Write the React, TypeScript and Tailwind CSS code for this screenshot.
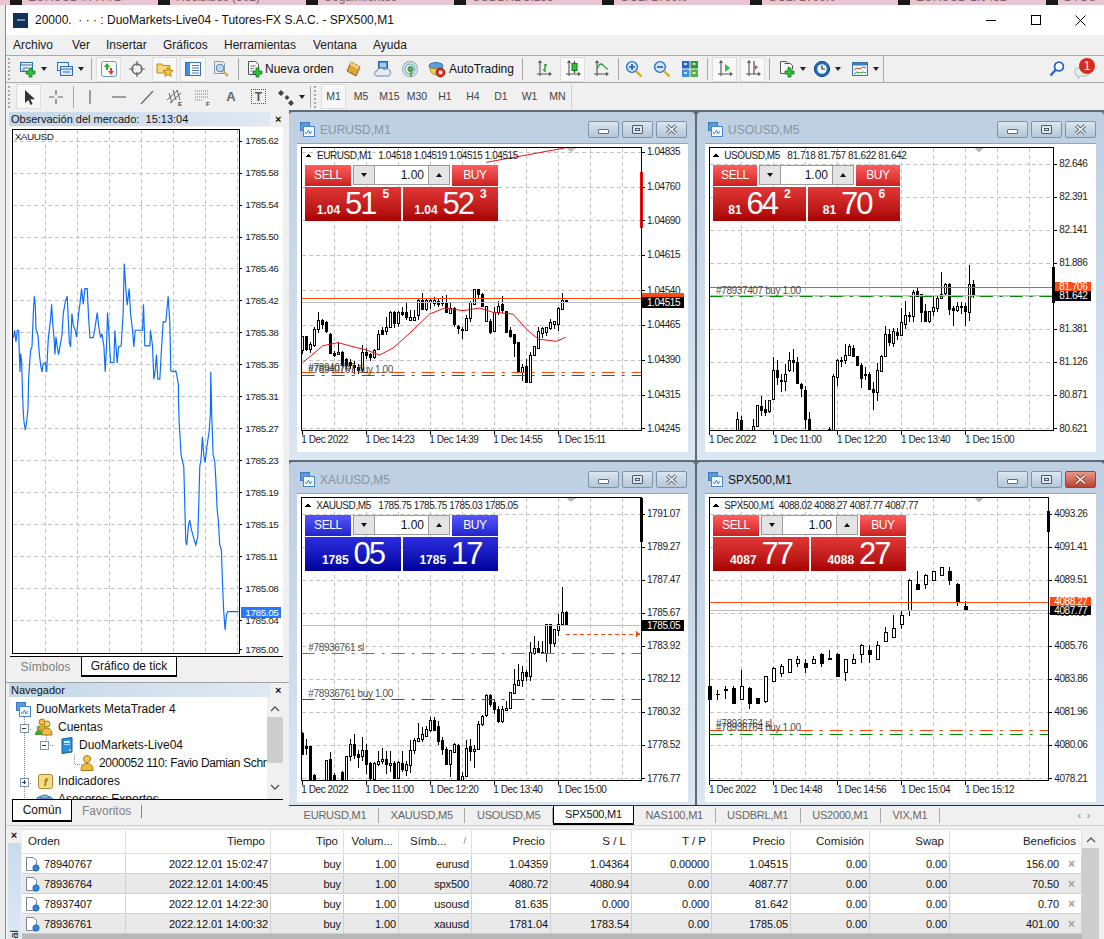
import type { ReactNode } from 'react';

// ---------- small toolbar drawings ----------
const Ico = ({ children, size = 18 }: { children: ReactNode; size?: number }) => (
  <svg width={size} height={size} viewBox="0 0 18 18" className="shrink-0">
    {children}
  </svg>
);
const GreenPlus = () => <path d="M10 8h3v3h3v3h-3v3h-3v-3H7v-3h3z" fill="#2ec13a" stroke="#0f7a1b" strokeWidth="0.8" />;
const Arrow = () => <span className="ml-[4px] h-0 w-0 border-x-[3px] border-t-[4px] border-x-transparent border-t-[#222]" />;
const Axes = () => (
  <path d="M5 1v15M2 14h14M3.5 3L5 1l1.5 2M14 12.5l2 1.5-2 1.5" fill="none" stroke="#555" strokeWidth="1.1" />
);

const ChartPlus = () => (
  <Ico>
    <rect x="1.5" y="2.5" width="12" height="9" fill="#eaf2fb" stroke="#2f6fb0" />
    <path d="M1 5h13M4 8h5M3 10h3" stroke="#2f6fb0" strokeWidth="1" />
    <GreenPlus />
  </Ico>
);
const Profiles = () => (
  <Ico>
    <rect x="1.5" y="2.5" width="11" height="8" fill="#eaf2fb" stroke="#2f6fb0" />
    <rect x="4.5" y="6.5" width="12" height="9" fill="#dbe9f8" stroke="#2f6fb0" />
    <path d="M4 9h13M7 12h7" stroke="#2f6fb0" strokeWidth="1" />
  </Ico>
);
const MarketWatch = () => (
  <Ico>
    <rect x="1.5" y="1.5" width="15" height="15" rx="2" fill="#f4f7fc" stroke="#6d94c2" />
    <path d="M7 3l3 4H8v3H6V7H4z" fill="#2aa834" />
    <path d="M11 15l-3-4h2V8h2v3h2z" fill="#e2402a" />
  </Ico>
);
const Target = () => (
  <Ico>
    <circle cx="9" cy="9" r="5" fill="none" stroke="#666" strokeWidth="1.4" />
    <path d="M9 1v5M9 12v5M1 9h5M12 9h5" stroke="#666" strokeWidth="1.2" />
  </Ico>
);
const FolderStar = () => (
  <Ico>
    <path d="M1 4h5l1 1.5h7V13H1z" fill="#f6d97a" stroke="#b98b22" />
    <path d="M12 7l1.6 3.2 3.4.4-2.5 2.3.7 3.4-3.2-1.7-3.2 1.7.7-3.4L7 10.6l3.4-.4z" fill="#f3c531" stroke="#a67a12" strokeWidth="0.8" />
  </Ico>
);
const DataWin = () => (
  <Ico>
    <rect x="1.5" y="2.5" width="15" height="13" fill="#f5f9fe" stroke="#3d72ac" />
    <rect x="2" y="3" width="4" height="12" fill="#3f8fdb" />
    <path d="M8 5.5h7M8 8h7M8 10.5h7M8 13h7" stroke="#5c7fa8" />
  </Ico>
);
const DocLens = () => (
  <Ico>
    <path d="M2.5 1.5h8l2 2v10h-10z" fill="#edf0f4" stroke="#8a97a8" />
    <circle cx="8" cy="8" r="3.8" fill="#bcd9f3" stroke="#5a7fa6" />
    <path d="M11 11l5 5" stroke="#d6a92c" strokeWidth="2.2" />
  </Ico>
);
const NewOrder = () => (
  <Ico>
    <path d="M2.5 1.5h7l3 3v10h-10z" fill="#f7f7f7" stroke="#555" />
    <path d="M4.5 6h5M4.5 8.5h3M4.5 11h2" stroke="#777" />
    <GreenPlus />
  </Ico>
);
const Gold = () => (
  <Ico>
    <path d="M6 2l9 5-4 9-9-5z" fill="#dba73a" stroke="#8a6414" />
    <path d="M6 2l9 5-3 2-8-5z" fill="#f0cd76" />
  </Ico>
);
const CloudDoc = () => (
  <Ico>
    <rect x="4.5" y="1.5" width="9" height="9" fill="#4a97e0" stroke="#2360a6" />
    <path d="M6 4h6M6 6h6" stroke="#fff" />
    <path d="M3 16a2.5 2.5 0 0 1 0-5 4 4 0 0 1 7-1.5A3.5 3.5 0 0 1 15 16z" fill="#e4edf7" stroke="#6d88a8" />
  </Ico>
);
const Signal = () => (
  <Ico>
    <circle cx="9" cy="9" r="7.5" fill="none" stroke="#a7b6c5" strokeWidth="1.3" />
    <circle cx="9" cy="9" r="5" fill="none" stroke="#7fb3c4" strokeWidth="1.3" />
    <circle cx="9.5" cy="9" r="2.6" fill="#57b36b" stroke="#3a8a4b" />
    <path d="M10 9v8" stroke="#4a9a5a" strokeWidth="1.5" />
  </Ico>
);
const Auto = () => (
  <Ico>
    <ellipse cx="8" cy="6" rx="7" ry="3.4" fill="#5aa0dc" stroke="#2c6aa6" />
    <path d="M2 8c0 4 3 7 6 7s5-2 6-5z" fill="#f1cf5a" stroke="#b28f25" />
    <circle cx="12.5" cy="12.5" r="4.4" fill="#d9321f" stroke="#8e1b10" />
    <rect x="10.8" y="10.8" width="3.4" height="3.4" fill="#fff" />
  </Ico>
);
const BarIco = () => (
  <Ico>
    <Axes />
    <path d="M10 4v8M8 10h2M10 5h2" stroke="#1f9c2c" strokeWidth="1.4" fill="none" />
  </Ico>
);
const CandleIco = () => (
  <Ico>
    <Axes />
    <path d="M10.5 1v12" stroke="#222" />
    <rect x="8" y="3.5" width="5" height="7" fill="#2ec13a" stroke="#0f7a1b" />
  </Ico>
);
const LineIco = () => (
  <Ico>
    <Axes />
    <path d="M5 9c2-5 4-6 6-4s3 4 5 4" fill="none" stroke="#2aa040" strokeWidth="1.3" />
  </Ico>
);
const Lens = ({ mode }: { mode: 'in' | 'out' }) => (
  <Ico>
    <circle cx="7" cy="7" r="5.4" fill="#cfe6fb" stroke="#2c72c4" strokeWidth="1.4" />
    <path d={mode === 'in' ? 'M4 7h6M7 4v6' : 'M4 7h6'} stroke="#1c5fb2" strokeWidth="1.6" />
    <path d="M11 11l5.5 5.5" stroke="#d6a92c" strokeWidth="2.4" />
  </Ico>
);
const Tile = () => (
  <Ico>
    <rect x="1" y="1" width="7.5" height="7.5" fill="#2766c4" />
    <rect x="9.5" y="1" width="7.5" height="7.5" fill="#2d9a3a" />
    <rect x="1" y="9.5" width="7.5" height="7.5" fill="#3f8fe0" />
    <rect x="9.5" y="9.5" width="7.5" height="7.5" fill="#58b04a" />
    <path d="M3 4h3M11.5 4h3M3 13h3M11.5 13h3" stroke="#fff" strokeWidth="1.5" />
  </Ico>
);
const ShiftIco = () => (
  <Ico>
    <Axes />
    <path d="M9 4l5 4-5 4z" fill="#2ec13a" />
  </Ico>
);
const ScrollIco = () => (
  <Ico>
    <Axes />
    <path d="M10 1v13" stroke="#333" />
    <path d="M11 5l1.5 1.5L15 7l-2.5 1L11 10z" fill="#d9321f" />
  </Ico>
);
const TplPlus = () => (
  <Ico>
    <path d="M2.5 1.5h6l2 2v10h-8z" fill="#f6f6f6" stroke="#555" />
    <path d="M6.5 3.5h6l2 2v4" fill="#f6f6f6" stroke="#555" />
    <GreenPlus />
  </Ico>
);
const Clock = () => (
  <Ico>
    <circle cx="9" cy="9" r="7.6" fill="#1d6cc0" stroke="#0d4586" />
    <circle cx="9" cy="9" r="4.8" fill="#eef4fb" />
    <path d="M9 5.5V9h3" fill="none" stroke="#333" strokeWidth="1.2" />
  </Ico>
);
const IndWin = () => (
  <Ico>
    <rect x="1.5" y="2.5" width="15" height="13" fill="#f2f7fd" stroke="#3d72ac" />
    <rect x="2" y="3" width="14" height="2.5" fill="#3d80c8" />
    <path d="M3 10l3-2 3 1 3-2 3 1" fill="none" stroke="#d04a2a" />
    <path d="M3 14l3-2 3 1 3-1 3 1" fill="none" stroke="#2aa040" />
  </Ico>
);
const Search = () => (
  <Ico>
    <circle cx="11" cy="6.5" r="4.4" fill="#fff" stroke="#2a62c0" strokeWidth="1.8" />
    <path d="M7.5 10l-5 5.5" stroke="#2a62c0" strokeWidth="2.4" />
  </Ico>
);
const Notify = () => (
  <svg width="24" height="24" viewBox="0 0 24 24" className="shrink-0">
    <path d="M5 11h9a3 3 0 0 1 3 3v2a3 3 0 0 1-3 3H8l-2 3v-3a3 3 0 0 1-3-3v-2a3 3 0 0 1 2-3z" fill="#e8eaec" stroke="#b5b9bd" />
    <circle cx="15" cy="9" r="8" fill="#d92b1c" />
    <text x="15" y="13" fontSize="12" textAnchor="middle" fill="#fff">1</text>
  </svg>
);
const CursorIco = () => (
  <Ico>
    <path d="M5 2v13l3.4-3 2.2 5 2-1-2.2-4.8H15z" fill="#333" />
  </Ico>
);
const Thin = ({ d }: { d: string }) => (
  <Ico>
    <path d={d} stroke="#666" strokeWidth="1.2" fill="none" />
  </Ico>
);
const ChannelIco = () => (
  <Ico>
    <path d="M1 12L12 2M4 15L15 5M3 5l3 10M7 2l3 10M11 2l3 10" stroke="#555" strokeWidth="0.9" fill="none" />
    <text x="12" y="18" fontSize="6" fontWeight="bold" fill="#444">E</text>
  </Ico>
);
const FiboIco = () => (
  <Ico>
    <path d="M1 3h13M1 6h13M1 9h13M1 12h7" stroke="#777" strokeDasharray="1 1" />
    <text x="12" y="18" fontSize="6" fontWeight="bold" fill="#444">F</text>
  </Ico>
);
const ShapesIco = () => (
  <Ico>
    <path d="M4 2l3 3-3 3-3-3zM10 7l2.5 2.5L10 12 7.500 9.500zM14 12l3 3-3 3-3-3z" fill="#444" />
  </Ico>
);

// ---------- toolbar parts ----------
const Tool = ({ className, on, children }: { className: string; on?: boolean; children: ReactNode }) => (
  <div
    className={`flex h-[25px] shrink-0 items-center justify-center ${on ? 'border border-[#dddddd] bg-[#f8f8f8]' : ''} ${className}`}
  >
    {children}
  </div>
);
const Grip = ({ className }: { className: string }) => (
  <div className={`h-[22px] shrink-0 border-l-2 border-dotted border-[#a8a8a8] ${className}`} />
);
const Sep = ({ className }: { className: string }) => (
  <div className={`flex h-[22px] shrink-0 justify-center ${className}`}>
    <div className="w-px bg-[#a8a8a8]" />
  </div>
);

// ---------- chart window ----------
type Candle = number[];
type Label = [number, string];

// chart coordinates are 3x page px, keep 1px lines on a pixel row
const snap = (v: number, o: number) => o + (Math.floor((v - o) / 3) + 0.5) * 3;

type ChartProps = {
  ox: number;
  right: number;
  labelX: number;
  vx: number[];
  labels: Label[];
  times: string[];
  tx: number[];
  name: string;
  ohlc: string;
  nameX: number;
  ohlcX: number;
  candles: Candle[];
  cw?: number;
  extra: ReactNode;
  tags: ReactNode;
};

const Chart = ({ ox, right, labelX, vx, labels, times, tx, name, ohlc, nameX, ohlcX, candles, cw = 6, extra, tags }: ChartProps) => (
  <svg width="391" height="309" viewBox={`${ox} 100 1173 927`} className="block" shapeRendering="crispEdges">
    <rect x={ox} y="100" width="1173" height="927" fill="#fff" />
    {vx.map((x) => (
      <line key={x} x1={snap(x, ox)} x2={snap(x, ox)} y1="112" y2="958" stroke="#c4c4c4" strokeWidth="3" strokeDasharray="12 9" />
    ))}
    {labels.map(([y]) => (
      <line key={y} x1={ox + 14} x2={right} y1={snap(y, 100)} y2={snap(y, 100)} stroke="#c4c4c4" strokeWidth="3" strokeDasharray="12 9" />
    ))}
    {candles.map(([x, t, b, h, l, f]) => (
      <g key={x}>
        <line x1={x} x2={x} y1={h} y2={Math.min(l, 958)} stroke="#000" strokeWidth="3" />
        <rect
          x={x - cw / 2}
          y={t}
          width={cw}
          height={Math.max(Math.min(b, 958) - t, 1)}
          fill={f ? '#000' : '#fff'}
          stroke="#000"
          strokeWidth="3"
        />
      </g>
    ))}
    {extra}
    <rect x={ox + 13} y="110" width={right - ox - 13} height="850" fill="none" stroke="#000" strokeWidth="3" />
    <polygon points={`${vx[7] + 25},112 ${vx[7] + 55},112 ${vx[7] + 40},124`} fill="#bbb" />
    <polygon points={`${nameX - 34},139 ${nameX - 16},139 ${nameX - 25},129`} fill="#000" />
    <g fontSize="30" letterSpacing="-1.3" fill="#1c1c1c" shapeRendering="auto">
      <text x={nameX} y="144">{name}</text>
      <text x={ohlcX} y="144">{ohlc}</text>
      {labels.map(([y, t]) => (
        <text key={y} x={labelX} y={y + 10}>{t}</text>
      ))}
      {times.map((t, i) => (
        <text key={t} x={tx[i] - 2} y="998">{t}</text>
      ))}
    </g>
    {labels.map(([y]) => (
      <line key={y} x1={right} x2={right + 10} y1={snap(y, 100)} y2={snap(y, 100)} stroke="#000" strokeWidth="3" />
    ))}
    {tx.map((x) => (
      <line key={x} x1={x} x2={x} y1="960" y2="972" stroke="#000" strokeWidth="3" />
    ))}
    {tags}
  </svg>
);

const OrderLine = ({ x1, x2, y, color }: { x1: number; x2: number; y: number; color: string }) => (
  <line x1={x1} x2={x2} y1={snap(y, 100)} y2={snap(y, 100)} stroke={color} strokeWidth="3.6" strokeDasharray="39 21 9 21" shapeRendering="auto" />
);
const SolidLine = ({ x1, x2, y, color }: { x1: number; x2: number; y: number; color: string }) => (
  <line x1={x1} x2={x2} y1={snap(y, 100)} y2={snap(y, 100)} stroke={color} strokeWidth="3" />
);
const Tag = ({ x, y, h, w, bg, t, tx }: { x: number; y: number; h: number; w: number; bg: string; t: string; tx: number }) => (
  <g>
    <rect x={x} y={y} width={w} height={h} fill={bg} />
    <text x={tx} y={y + h / 2 + 11} fontSize="30" letterSpacing="-1.3" fill="#fff" shapeRendering="auto">{t}</text>
  </g>
);
const Note = ({ x, y, t }: { x: number; y: number; t: string }) => (
  <text x={x} y={y} fontSize="30" letterSpacing="-1.1" fill="#333" fillOpacity="0.9" shapeRendering="auto">{t}</text>
);

const WinIcon = ({ className }: { className?: string }) => (
  <svg width="15" height="15" viewBox="0 0 15 15" className={`shrink-0 ${className ?? ''}`}>
    <rect x="0.5" y="0.5" width="9" height="8" fill="#5a9be0" stroke="#3a78c0" />
    <rect x="3.500" y="4.500" width="11" height="10" fill="#f4f8fd" stroke="#4a86cc" />
    <path d="M5 10l1.500 2 2-4 1.500 4 2-3" fill="none" stroke="#4a86cc" />
  </svg>
);

const WinBtn = ({ children, red }: { children: ReactNode; red?: boolean }) => (
  <div
    className={`flex h-[17px] w-[31px] items-center justify-center rounded-[2px] border ${
      red
        ? 'border-[#8c4a3e] bg-linear-to-b from-[#e8998a] to-[#b8402c]'
        : 'border-[#7f93a8] bg-linear-to-b from-[#dbe6f0] to-[#b4c6d8]'
    }`}
  >
    {children}
  </div>
);

const CloseX = ({ active }: { active?: boolean }) => (
  <svg width="13" height="11" viewBox="0 0 13 11">
    <path d="M2 1.500l9 8M11 1.500l-9 8" stroke={active ? '#8c3a2e' : '#4e5a68'} strokeWidth="3.4" />
    <path d="M2 1.500l9 8M11 1.500l-9 8" stroke="#fff" strokeWidth="1.6" />
  </svg>
);

const Window = ({ title, active, children }: { title: string; active?: boolean; children: ReactNode }) => (
  <div className="flex h-[348px] flex-col rounded-t-[4px] bg-linear-to-b from-[#bdcfe1] to-[#dbe6f3]">
    <div className="flex h-[31px] shrink-0 items-center pl-[11px] pr-[8px] pt-[4px]">
      <WinIcon />
      <span className={`ml-[5px] text-[12px] ${active ? 'text-[#111111]' : 'text-[#8895a3]'}`}>{title}</span>
      <div className="ml-auto flex gap-[3px]">
        <WinBtn>
          <span className="mt-[3px] h-[5px] w-[11px] rounded-[1px] border border-[#5d6a78] bg-white" />
        </WinBtn>
        <WinBtn>
          <span className="flex h-[9px] w-[11px] items-center justify-center rounded-[1px] border border-[#4e5a68] bg-[#dde6ee]">
            <span className="h-[3px] w-[5px] border border-[#4e5a68]" />
          </span>
        </WinBtn>
        <WinBtn red={active}>
          <CloseX active={active} />
        </WinBtn>
      </div>
    </div>
    <div className="relative mx-[8px] h-[309px] w-[391px] shrink-0 overflow-hidden border-t border-[#9aa4ae]">{children}</div>
  </div>
);

type Px = { small: string; big: string; sup?: string };

const PriceBox = ({ p, blue, className }: { p: Px; blue?: boolean; className: string }) => (
  <div
    className={`flex h-[34px] items-baseline justify-center pt-[1px] text-white ${
      blue ? 'bg-linear-to-b from-[#2c2ce0] to-[#00009c]' : 'bg-linear-to-b from-[#e23636] to-[#a80000]'
    } ${className}`}
  >
    <span className="mr-[5px] text-[12px] font-bold">{p.small}</span>
    <span className="text-[31px] leading-[32px] tracking-[-2px]">{p.big}</span>
    {p.sup && <span className="ml-[7px] self-start text-[12px] font-bold leading-[13px]">{p.sup}</span>}
  </div>
);

const TradeTab = ({ t, blue, className }: { t: string; blue?: boolean; className: string }) => (
  <div
    className={`flex h-[22px] shrink-0 justify-center border-b border-white text-[12px] leading-[21px] tracking-[-0.4px] text-white ${
      blue ? 'bg-linear-to-b from-[#5656ff] to-[#2222cc]' : 'bg-linear-to-b from-[#ff5c5c] to-[#cc2020]'
    } ${className}`}
  >
    {t}
  </div>
);

const Spin = ({ up }: { up?: boolean }) => (
  <div className="flex w-[20px] shrink-0 items-center justify-center bg-[#e4e4e4]">
    <span
      className={`h-0 w-0 border-x-[3px] border-x-transparent ${
        up ? 'border-b-[4px] border-b-[#111]' : 'border-t-[4px] border-t-[#111]'
      }`}
    />
  </div>
);

const TradePanel = ({ sell, buy, blue, narrow }: { sell: Px; buy: Px; blue?: boolean; narrow?: boolean }) => (
  <div className={`absolute left-[8px] top-[21px] ${narrow ? 'w-[187px]' : 'w-[193px]'}`}>
    <div className="flex">
      <TradeTab t="SELL" blue={blue} className={narrow ? 'w-[44px]' : 'w-[46px]'} />
      <div className={`mx-[2px] flex h-[20px] border border-[#9c9c9c] bg-white ${narrow ? 'w-[95px]' : 'w-[97px]'}`}>
        <Spin />
        <div className="flex-1 border-x border-[#9c9c9c] pr-[4px] text-right text-[12px] leading-[18px] text-[#111]">1.00</div>
        <Spin up />
      </div>
      <TradeTab t="BUY" blue={blue} className={narrow ? 'w-[44px]' : 'w-[46px]'} />
    </div>
    <div className="flex gap-[2px]">
      <PriceBox p={sell} blue={blue} className={narrow ? 'w-[93px]' : 'w-[96px]'} />
      <PriceBox p={buy} blue={blue} className={narrow ? 'w-[92px]' : 'w-[95px]'} />
    </div>
  </div>
);

// ---------- chart data: [x, bodyTop, bodyBottom, high, low, filled], in 1/3 px ----------
const eurCandles: Candle[] = [
  [38, 678, 720, 675, 730, 0], [50, 678, 716, 675, 722, 1], [62, 700, 716, 695, 728, 0], [74, 655, 705, 650, 708, 0],
  [86, 628, 655, 603, 668, 0], [98, 628, 640, 625, 655, 1], [110, 635, 663, 632, 668, 1], [122, 670, 728, 668, 730, 1],
  [134, 727, 733, 722, 738, 1], [146, 726, 730, 695, 733, 0], [158, 724, 765, 722, 770, 1], [170, 745, 765, 742, 775, 1],
  [182, 755, 765, 745, 775, 1], [194, 765, 770, 752, 790, 1], [206, 770, 778, 760, 790, 1], [218, 725, 775, 702, 785, 0],
  [230, 725, 735, 712, 745, 1], [242, 730, 740, 728, 752, 1], [254, 718, 740, 715, 745, 0], [266, 670, 716, 658, 718, 0],
  [278, 660, 670, 648, 672, 1], [290, 650, 662, 620, 674, 0], [302, 606, 650, 600, 652, 0], [314, 606, 638, 602, 652, 1],
  [326, 606, 638, 602, 650, 0], [338, 604, 610, 590, 615, 1], [350, 606, 620, 574, 628, 1], [362, 620, 628, 598, 630, 0],
  [374, 620, 628, 598, 630, 0], [386, 570, 614, 565, 628, 0], [398, 570, 596, 547, 598, 1], [410, 570, 596, 563, 600, 0],
  [422, 570, 576, 563, 595, 0], [434, 570, 578, 558, 585, 0], [446, 572, 582, 566, 588, 1], [458, 575, 578, 556, 585, 1],
  [470, 577, 605, 553, 608, 1], [482, 592, 607, 574, 610, 0], [494, 592, 642, 590, 648, 1], [506, 648, 652, 644, 670, 1],
  [518, 656, 658, 650, 686, 1], [530, 622, 658, 612, 660, 0], [542, 575, 622, 570, 635, 0], [554, 536, 580, 534, 582, 0],
  [566, 536, 552, 534, 562, 1], [578, 550, 588, 548, 590, 1], [590, 588, 632, 586, 634, 0], [602, 632, 664, 625, 670, 1],
  [614, 605, 662, 590, 664, 0], [626, 586, 605, 570, 612, 0], [638, 580, 600, 555, 606, 1], [650, 602, 666, 600, 668, 1],
  [662, 660, 678, 648, 682, 1], [674, 672, 698, 670, 738, 1], [686, 696, 786, 694, 788, 1], [698, 770, 786, 760, 810, 0],
  [710, 768, 815, 745, 816, 1], [722, 733, 815, 725, 818, 0], [734, 708, 733, 706, 736, 0], [746, 663, 712, 650, 714, 0],
  [758, 654, 668, 650, 682, 0], [770, 650, 664, 648, 675, 0], [782, 636, 654, 625, 658, 0], [794, 633, 640, 632, 656, 0],
  [806, 592, 642, 590, 660, 0], [818, 568, 596, 548, 598, 0], [830, 568, 574, 568, 574, 1],
];

const usoCandles: Candle[] = [
  [130, 925, 958, 905, 958, 0], [142, 928, 958, 915, 958, 1], [178, 948, 958, 925, 958, 0], [190, 885, 948, 882, 950, 0],
  [202, 888, 900, 855, 915, 1], [214, 897, 905, 868, 915, 1], [226, 870, 903, 868, 908, 0], [238, 778, 866, 740, 868, 0],
  [250, 778, 800, 748, 822, 1], [262, 808, 811, 790, 845, 1], [274, 790, 812, 760, 840, 0], [286, 750, 780, 725, 785, 0],
  [298, 750, 755, 715, 785, 1], [310, 755, 818, 738, 820, 1], [322, 820, 832, 818, 858, 1], [334, 838, 925, 825, 955, 1],
  [346, 925, 958, 905, 958, 1], [406, 955, 958, 950, 958, 1], [418, 798, 958, 790, 958, 0], [430, 750, 800, 745, 825, 0],
  [442, 750, 752, 740, 770, 1], [454, 733, 748, 700, 760, 0], [466, 708, 735, 700, 737, 0], [478, 712, 737, 702, 738, 1],
  [490, 738, 764, 735, 766, 1], [502, 764, 802, 758, 833, 1], [514, 792, 794, 770, 808, 1], [526, 790, 837, 785, 838, 1],
  [538, 835, 845, 815, 898, 1], [550, 778, 845, 757, 870, 0], [562, 736, 782, 732, 784, 0], [574, 672, 736, 645, 738, 0],
  [586, 670, 696, 655, 707, 1], [598, 662, 698, 652, 708, 0], [610, 664, 675, 652, 688, 1], [622, 636, 674, 592, 676, 0],
  [634, 615, 640, 572, 655, 0], [646, 613, 616, 603, 635, 1], [658, 546, 616, 538, 635, 0], [670, 543, 556, 528, 557, 1],
  [682, 552, 605, 550, 635, 1], [694, 603, 632, 580, 635, 1], [706, 603, 632, 600, 638, 0], [718, 590, 602, 556, 615, 0],
  [730, 562, 592, 555, 605, 0], [742, 550, 563, 483, 566, 0], [754, 520, 549, 518, 552, 0], [766, 520, 596, 518, 612, 1],
  [778, 594, 598, 585, 645, 1], [790, 588, 598, 575, 605, 0], [802, 586, 590, 573, 610, 1], [814, 586, 602, 576, 645, 1],
  [826, 522, 605, 462, 632, 0], [838, 522, 554, 507, 563, 1],
];

const xauCandles: Candle[] = [
  [38, 818, 880, 815, 882, 1], [50, 858, 862, 835, 882, 1], [62, 858, 958, 855, 958, 1], [74, 945, 958, 940, 958, 1],
  [110, 900, 958, 898, 958, 0], [122, 897, 958, 875, 958, 1], [134, 945, 958, 938, 958, 1], [158, 935, 958, 930, 958, 1],
  [170, 888, 958, 885, 958, 0], [182, 850, 888, 835, 900, 0], [194, 850, 885, 820, 895, 1], [206, 880, 890, 868, 923, 1],
  [218, 870, 888, 830, 900, 0], [230, 870, 910, 850, 940, 1], [242, 908, 952, 905, 958, 1], [254, 908, 955, 905, 958, 0],
  [266, 902, 910, 870, 915, 0], [278, 895, 902, 862, 910, 0], [290, 895, 910, 870, 940, 1], [302, 908, 915, 870, 935, 0],
  [314, 908, 952, 900, 955, 1], [326, 906, 952, 902, 955, 0], [338, 908, 925, 870, 935, 1], [350, 912, 928, 900, 945, 0],
  [362, 868, 914, 838, 938, 0], [374, 840, 868, 832, 880, 0], [386, 832, 842, 786, 845, 0], [398, 822, 836, 798, 845, 0],
  [410, 806, 826, 795, 828, 0], [422, 778, 808, 770, 815, 0], [434, 778, 808, 770, 810, 1], [446, 796, 842, 780, 852, 1],
  [458, 838, 866, 830, 883, 1], [470, 866, 912, 860, 913, 1], [482, 870, 912, 868, 950, 0], [494, 852, 875, 848, 878, 0],
  [506, 855, 958, 850, 958, 1], [518, 946, 958, 935, 958, 0], [530, 862, 948, 838, 950, 0], [542, 858, 872, 835, 900, 1],
  [554, 865, 871, 852, 922, 0], [566, 792, 866, 780, 868, 0], [578, 766, 792, 762, 795, 0], [590, 704, 765, 700, 768, 0],
  [602, 704, 732, 700, 738, 1], [614, 726, 746, 715, 760, 1], [626, 747, 782, 735, 788, 1], [638, 746, 782, 735, 788, 0],
  [650, 742, 750, 722, 752, 0], [662, 696, 742, 694, 745, 0], [674, 670, 698, 625, 700, 0], [686, 660, 673, 610, 675, 0],
  [698, 634, 660, 615, 680, 0], [710, 636, 647, 628, 660, 1], [722, 576, 647, 545, 660, 0], [734, 564, 578, 525, 582, 0],
  [746, 562, 575, 540, 578, 1], [758, 574, 577, 540, 578, 1], [770, 492, 577, 490, 605, 0], [782, 492, 548, 490, 580, 1],
  [794, 506, 548, 505, 560, 0], [806, 490, 508, 460, 525, 0], [818, 454, 491, 378, 493, 0], [830, 454, 493, 452, 494, 1],
];

const spxCandles: Candle[] = [
  [46, 676, 716, 648, 728, 1], [70, 700, 702, 688, 718, 1], [94, 686, 688, 675, 716, 1], [118, 682, 727, 676, 728, 1],
  [142, 676, 716, 628, 716, 0], [166, 682, 727, 680, 745, 1], [190, 714, 727, 714, 727, 1], [214, 648, 721, 648, 727, 0],
  [238, 622, 661, 620, 663, 0], [262, 618, 638, 610, 650, 0], [286, 596, 634, 594, 635, 0], [310, 595, 607, 586, 620, 0],
  [334, 607, 620, 594, 636, 1], [358, 595, 607, 586, 610, 0], [382, 580, 608, 578, 620, 1], [406, 594, 596, 568, 596, 1],
  [430, 580, 647, 578, 648, 1], [454, 596, 634, 594, 660, 0], [478, 595, 607, 580, 608, 0], [502, 553, 580, 550, 608, 0],
  [526, 568, 580, 553, 608, 1], [550, 553, 595, 540, 597, 0], [574, 514, 541, 500, 543, 0], [598, 502, 529, 462, 531, 0],
  [622, 463, 490, 450, 505, 0], [646, 358, 448, 356, 465, 0], [670, 370, 385, 330, 387, 1], [694, 343, 370, 340, 386, 0],
  [718, 331, 358, 330, 360, 0], [742, 319, 343, 318, 345, 0], [766, 331, 358, 318, 372, 1], [790, 370, 425, 368, 437, 1],
  [814, 436, 449, 422, 450, 1],
];

const vxA = [133, 229, 325, 421, 517, 613, 709, 805, 901, 997];
const vxB = [142, 238, 334, 430, 526, 622, 718, 814, 910, 1006];

const eurMa = '38,757 70,730 100,705 145,696 190,708 230,718 270,733 310,712 360,668 420,610 465,592 520,600 570,592 610,605 670,610 710,655 745,685 800,692 828,680';

const tickPath =
  '40,698 44,675 48,710 52,675 56,675 58,745 60,800 62,745 65,770 68,875 70,920 72,950 76,975 80,950 84,910 86,820 90,760 92,735 96,725 100,625 103,573 106,600 108,670 114,690 118,745 122,780 126,800 130,775 136,772 140,800 145,700 152,640 155,597 158,650 162,695 165,748 168,695 172,725 176,748 180,725 186,690 190,625 196,590 202,573 205,640 208,710 212,725 216,625 220,660 226,675 230,695 236,625 240,597 245,550 250,597 255,550 262,550 266,635 270,697 280,697 285,670 292,622 296,660 302,697 306,685 312,722 316,800 320,720 323,622 328,697 332,772 342,772 345,675 352,773 356,725 364,722 370,620 373,475 378,550 382,600 388,550 392,625 398,675 402,725 406,675 428,675 431,597 435,722 450,722 452,675 458,722 462,822 466,797 470,748 474,822 480,822 484,750 490,650 498,650 505,573 510,650 513,797 522,800 528,797 532,815 536,840 536,885 538,950 541,1000 544,1050 552,1085 555,1200 558,1310 561,1320 566,1260 570,1245 574,1270 582,1300 588,1320 594,1295 597,1200 600,1085 604,1060 608,995 612,1050 616,1072 622,1020 628,980 632,925 633,800 636,930 640,1048 645,1070 648,1120 652,1210 656,1250 660,1320 665,1335 668,1430 672,1520 676,1575 680,1530 684,1520 718,1520';

const tickLabels: Label[] = [
  [107, '1785.62'], [203, '1785.58'], [299, '1785.54'], [395, '1785.50'], [491, '1785.46'], [587, '1785.42'],
  [683, '1785.38'], [779, '1785.35'], [875, '1785.31'], [971, '1785.27'], [1067, '1785.23'], [1163, '1785.19'],
  [1259, '1785.15'], [1355, '1785.11'], [1451, '1785.08'], [1547, '1785.04'], [1633, '1785.00'],
];

const TickChart = () => (
  <svg width="273" height="529" viewBox="30 65 820 1588" className="block shrink-0" shapeRendering="crispEdges">
    <rect x="30" y="65" width="820" height="1588" fill="#fff" />
    {[137, 233, 329, 425, 521, 617, 713].map((x) => (
      <line key={x} x1={x} x2={x} y1="74" y2="1644" stroke="#c4c4c4" strokeWidth="3" strokeDasharray="12 9" />
    ))}
    {tickLabels.slice(0, 16).map(([y]) => (
      <line key={y} x1="40" x2="718" y1={y} y2={y} stroke="#c4c4c4" strokeWidth="3" strokeDasharray="12 9" />
    ))}
    <polyline points={tickPath} fill="none" stroke="#0a6cff" strokeWidth="3.5" shapeRendering="auto" />
    <rect x="38" y="72" width="680" height="1573" fill="none" stroke="#000" strokeWidth="3" />
    <g fontSize="30" letterSpacing="-1.3" fill="#1c1c1c" shapeRendering="auto">
      <text x="44" y="104">XAUUSD</text>
      {tickLabels.map(([y, t]) => (
        <text key={y} x="737" y={y + 10}>{t}</text>
      ))}
    </g>
    {tickLabels.map(([y]) => (
      <line key={y} x1="718" x2="728" y1={y} y2={y} stroke="#000" strokeWidth="3" />
    ))}
    <Tag x={723} y={1507} w={122} h={32} bg="#2979ff" t="1785.05" tx={737} />
  </svg>
);

// ---------- tree icons ----------
const Users = () => (
  <svg width="18" height="18" viewBox="0 0 18 18" className="shrink-0">
    <circle cx="4" cy="10" r="2.500" fill="#5cc24a" />
    <path d="M0 17c0-4 2-5 4-5s4 1 4 5z" fill="#3da838" />
    <circle cx="7" cy="4" r="3" fill="#f0c04a" stroke="#a87a12" />
    <path d="M3 12c0-3 2-4 4-4s4 1 4 4z" fill="#e8b23a" stroke="#a87a12" />
    <circle cx="12" cy="6" r="3" fill="#f5d06a" stroke="#a87a12" />
    <path d="M7 17c0-5 2-7 5-7s5 2 5 7z" fill="#eebf48" stroke="#a87a12" />
  </svg>
);
const Server = () => (
  <svg width="13" height="17" viewBox="0 0 13 17" className="shrink-0">
    <path d="M1 2l10-1.500V15L1 16.500z" fill="#2d8fe0" stroke="#155a9e" />
    <rect x="3" y="4" width="6" height="2" fill="#d6ecff" />
    <rect x="3" y="7" width="6" height="1" fill="#a9d4f7" />
    <circle cx="9" cy="13" r="1" fill="#ffe080" />
  </svg>
);
const User = () => (
  <svg width="14" height="16" viewBox="0 0 14 16" className="shrink-0">
    <circle cx="7" cy="4" r="3.500" fill="#f2c850" stroke="#a87a12" />
    <path d="M1 15.500c0-5 2-7 6-7s6 2 6 7z" fill="#edbb3e" stroke="#a87a12" />
  </svg>
);
const FuncIco = () => (
  <svg width="15" height="15" viewBox="0 0 15 15" className="shrink-0">
    <rect x="0.500" y="0.500" width="14" height="14" rx="2" fill="#f5dc86" stroke="#a88a2a" />
    <text x="7.500" y="11.500" fontSize="11" fontStyle="italic" fontWeight="bold" textAnchor="middle" fill="#a8761a">f</text>
  </svg>
);
const HatIco = () => (
  <svg width="17" height="15" viewBox="0 0 17 15" className="shrink-0">
    <ellipse cx="8.500" cy="7" rx="8" ry="3" fill="#6aa8dc" stroke="#3a78b0" />
    <path d="M4 6c1-4 8-4 9 0z" fill="#8fc2ea" stroke="#3a78b0" />
  </svg>
);

const TreeRow = ({ className, icon, text }: { className: string; icon: ReactNode; text: string }) => (
  <div className={`flex h-[18px] items-center whitespace-nowrap text-[12px] text-[#111] ${className}`}>
    {icon}
    <span className="ml-[5px]">{text}</span>
  </div>
);

const PanelHead = ({ t }: { t: string }) => (
  <div className="flex h-[14px] shrink-0 items-center">
    <div className="ml-[3px] h-[14px] w-[261px] truncate whitespace-pre bg-linear-to-r from-[#c5d7e8] to-[#e0e9f3] pl-[2px] text-[11px] leading-[14px] text-[#111]">
      {t}
    </div>
    <span className="ml-[5px] text-[11px] font-bold leading-none text-[#111]">×</span>
  </div>
);

// ---------- terminal table ----------
const cols = 'grid grid-cols-[104px_145px_73px_55px_73px_79px_81px_80px_79px_79px_80px_132px]';
const headers = ['Orden', 'Tiempo', 'Tipo', 'Volum...', 'Símb...', 'Precio', 'S / L', 'T / P', 'Precio', 'Comisión', 'Swap', 'Beneficios'];
const rows = [
  ['78940767', '2022.12.01 15:02:47', 'buy', '1.00', 'eurusd', '1.04359', '1.04364', '0.00000', '1.04515', '0.00', '0.00', '156.00'],
  ['78936764', '2022.12.01 14:00:45', 'buy', '1.00', 'spx500', '4080.72', '4080.94', '0.00', '4087.77', '0.00', '0.00', '70.50'],
  ['78937407', '2022.12.01 14:22:30', 'buy', '1.00', 'usousd', '81.635', '0.000', '0.000', '81.642', '0.00', '0.00', '0.70'],
  ['78936761', '2022.12.01 14:00:32', 'buy', '1.00', 'xauusd', '1781.04', '1783.54', '0.00', '1785.05', '0.00', '0.00', '401.00'],
];
const tabs = ['EURUSD,M1', 'XAUUSD,M5', 'USOUSD,M5', 'SPX500,M1', 'NAS100,M1', 'USDBRL,M1', 'US2000,M1', 'VIX,M1'];

const DocDot = () => (
  <svg width="15" height="16" viewBox="0 0 15 16" className="shrink-0">
    <path d="M1.500 1.500h7l3 3v10h-10z" fill="#fff" stroke="#7d8792" />
    <circle cx="11" cy="12" r="3.200" fill="#2e86d8" stroke="#1a5c9e" strokeWidth="0.7" />
  </svg>
);

const menus: [string, string][] = [
  ['Archivo', 'w-[59px]'], ['Ver', 'w-[34px]'], ['Insertar', 'w-[57px]'], ['Gráficos', 'w-[61px]'],
  ['Herramientas', 'w-[89px]'], ['Ventana', 'w-[60px]'], ['Ayuda', 'w-[50px]'],
];
const periods: [string, string][] = [
  ['M5', 'w-[30px]'], ['M15', 'w-[27px]'], ['M30', 'w-[28px]'], ['H1', 'w-[28px]'],
  ['H4', 'w-[28px]'], ['D1', 'w-[28px]'], ['W1', 'w-[29px]'], ['MN', 'w-[27px]'],
];

export default function App() {
  return (
    <div className="relative h-[939px] w-[1104px] overflow-hidden bg-white font-['Liberation_Sans',sans-serif] text-[12px] text-[#111]">
      {/* browser tabs peeking out behind the terminal */}
      <div className="flex h-[5px] overflow-hidden bg-[#e9c5d0] pl-[10px] text-[12px] leading-[3px] text-[#4a3a40]">
        {['EURUSD #FX #L', 'Recibidos (302)', 'Seguimientos', 'USDBRL 5.183', 'GC1! 1799.0', 'GC1! 1799.0', 'EURUSD 1.0452', 'BTCU'].map((t, i) => (
          <div key={i} className="flex w-[148px] shrink-0 items-start gap-[6px]">
            <span className="h-[5px] w-[12px] bg-[#1a1a1a]" />
            <span className="-mt-[4px] opacity-70">{t}</span>
          </div>
        ))}
      </div>

      <div className="flex h-[934px]">
        <div className="w-[5px] shrink-0 bg-[#ececec]" />
        <div className="flex min-w-0 flex-1 flex-col border-l border-[#8a8a8a] bg-[#f0f0f0]">
          {/* title */}
          <div className="flex h-[30px] shrink-0 items-center bg-white">
            <div className="ml-[7px] flex h-[15px] w-[15px] items-center justify-center bg-[#12305c]">
              <span className="h-[2px] w-[8px] bg-[#7d8fa8]" />
            </div>
            <span className="ml-[7px] whitespace-pre text-[12px] text-[#111]">20000.  · · · : DuoMarkets-Live04 - Tutores-FX S.A.C. - SPX500,M1</span>
            <div className="ml-auto mr-px flex">
              <div className="flex h-[30px] w-[45px] items-center justify-center">
                <span className="h-px w-[10px] bg-black" />
              </div>
              <div className="flex h-[30px] w-[45px] items-center justify-center">
                <span className="h-[10px] w-[10px] border border-black" />
              </div>
              <div className="flex h-[30px] w-[45px] items-center justify-center">
                <svg width="11" height="11" viewBox="0 0 11 11">
                  <path d="M.5.500l10 10M10.500.500l-10 10" stroke="#000" />
                </svg>
              </div>
            </div>
          </div>

          {/* menu */}
          <div className="flex h-[20px] shrink-0 items-center pl-[7px]">
            {menus.map(([m, w]) => (
              <span key={m} className={`${w} shrink-0 text-[12px] text-[#1a1a1a]`}>{m}</span>
            ))}
          </div>

          {/* toolbar 1 */}
          <div className="flex h-[28px] shrink-0 items-center border-y border-[#a8a8a8]">
            <div className="flex h-full w-[878px] shrink-0 items-center border-r border-[#a8a8a8]">
              <Grip className="ml-[2px] mr-[5px] w-[0px]" />
              <Tool className="w-[34px] justify-start pl-[4px]"><ChartPlus /><Arrow /></Tool>
              <Tool className="w-[38px] justify-start pl-[7px]"><Profiles /><Arrow /></Tool>
              <Sep className="w-[9px]" />
              <Tool on className="w-[25px]"><MarketWatch /></Tool>
              <Tool className="w-[31px]"><Target /></Tool>
              <Tool on className="w-[25px]"><FolderStar /></Tool>
              <Tool on className="ml-[3px] w-[26px]"><DataWin /></Tool>
              <Tool className="w-[30px]"><DocLens /></Tool>
              <Sep className="w-[4px]" />
              <Tool className="w-[98px] justify-start pl-[6px]"><NewOrder /><span className="ml-[1px] text-[12px] text-[#111]">Nueva orden</span></Tool>
              <Tool className="w-[31px]"><Gold /></Tool>
              <Tool className="w-[27px]"><CloudDoc /></Tool>
              <Tool className="w-[27px]"><Signal /></Tool>
              <Tool className="w-[94px] justify-start pl-[5px]"><Auto /><span className="ml-[3px] text-[12px] text-[#111]">AutoTrading</span></Tool>
              <Sep className="w-[10px]" />
              <Tool className="w-[33px]"><BarIco /></Tool>
              <Tool on className="w-[25px]"><CandleIco /></Tool>
              <Tool className="w-[31px]"><LineIco /></Tool>
              <Sep className="w-[4px]" />
              <Tool className="w-[28px]"><Lens mode="in" /></Tool>
              <Tool className="w-[27px]"><Lens mode="out" /></Tool>
              <Tool className="w-[30px]"><Tile /></Tool>
              <Sep className="w-[4px]" />
              <Tool on className="ml-[3px] w-[25px]"><ShiftIco /></Tool>
              <Tool on className="ml-[3px] w-[25px]"><ScrollIco /></Tool>
              <Sep className="w-[8px]" />
              <Tool className="w-[36px] justify-start pl-[5px]"><TplPlus /><Arrow /></Tool>
              <Tool className="w-[36px] justify-start pl-[4px]"><Clock /><Arrow /></Tool>
              <Tool className="w-[39px] justify-start pl-[6px]"><IndWin /><Arrow /></Tool>
            </div>
            <div className="ml-auto mr-[8px] flex items-center">
              <Search />
              <div className="ml-[6px]"><Notify /></div>
            </div>
          </div>

          {/* toolbar 2 */}
          <div className="flex h-[27px] shrink-0 items-center">
            <Grip className="ml-[2px] mr-[6px] w-[0px]" />
            <Tool on className="w-[25px]"><CursorIco /></Tool>
            <Tool className="w-[29px]"><Thin d="M9 2v5M9 11v5M2 9h5M11 9h5" /></Tool>
            <Sep className="w-[6px]" />
            <Tool className="w-[28px]"><Thin d="M9 2v14" /></Tool>
            <Tool className="w-[30px]"><Thin d="M2 9h14" /></Tool>
            <Tool className="w-[26px]"><Thin d="M3 16L15 3" /></Tool>
            <Tool className="w-[29px]"><ChannelIco /></Tool>
            <Tool className="w-[28px]"><FiboIco /></Tool>
            <Tool className="w-[28px] text-[13px] font-bold text-[#666]">A</Tool>
            <Tool className="w-[27px]">
              <span className="flex h-[15px] w-[15px] items-center justify-center border border-dotted border-[#555] text-[12px] font-bold text-[#555]">T</span>
            </Tool>
            <Tool className="w-[35px] justify-start pl-[5px]"><ShapesIco /><Arrow /></Tool>
            <Sep className="w-[6px]" />
            <Grip className="ml-[1px] mr-[5px] w-[0px]" />
            <Tool on className="w-[25px] text-[10.500px] text-[#444]">M1</Tool>
            {periods.map(([p, w]) => (
              <Tool key={p} className={`${w} text-[10.500px] text-[#444]`}>{p}</Tool>
            ))}
            <div className="h-[26px] w-px bg-[#d0d0d0]" />
          </div>

          {/* workspace */}
          <div className="flex h-[715px] shrink-0">
            {/* left panels */}
            <div className="flex w-[283px] shrink-0 flex-col pt-[2px]">
              <PanelHead t="Observación del mercado:  15:13:04" />
              <div className="ml-[4px] mt-[1px]"><TickChart /></div>
              <div className="ml-[4px] flex h-[21px] w-[273px] shrink-0 border-t border-black bg-[#f0f0f0]">
                <div className="flex w-[71px] items-center justify-center text-[12px] text-[#808080]">Símbolos</div>
                <div className="flex w-[96px] items-center justify-center border-x border-b-2 border-black bg-white text-[12px] text-[#111]">Gráfico de tick</div>
              </div>
              <div className="mt-[5px] flex flex-1 flex-col border-t border-[#a0a0a0]">
                <PanelHead t="Navegador" />
                <div className="relative ml-[4px] flex h-[102px] w-[273px] shrink-0 overflow-hidden bg-white">
                  <svg width="100" height="102" className="absolute left-0 top-0" viewBox="0 0 100 102" shapeRendering="crispEdges">
                    <g stroke="#888" strokeDasharray="1 1" fill="none">
                      <path d="M14 20v82M14 32h8M36 38v10M36 48h8M64 58v9h14M14 86h8" />
                    </g>
                    <g fill="#fff" stroke="#7f93a8">
                      <rect x="10" y="27" width="8" height="8" />
                      <rect x="30" y="44" width="8" height="8" />
                      <rect x="10" y="81" width="8" height="8" />
                    </g>
                    <path d="M12 31h4M32 48h4M12 85h4M14 83v4" stroke="#2a3a5a" />
                  </svg>
                  <div className="relative w-[257px] shrink-0 overflow-hidden pt-[3px]">
                    <TreeRow className="pl-[6px]" icon={<WinIcon />} text="DuoMarkets MetaTrader 4" />
                    <TreeRow className="pl-[25px]" icon={<Users />} text="Cuentas" />
                    <TreeRow className="pl-[51px]" icon={<Server />} text="DuoMarkets-Live04" />
                    <TreeRow className="pl-[70px] tracking-[-0.35px]" icon={<User />} text="2000052 110: Favio Damian Schn" />
                    <TreeRow className="pl-[28px]" icon={<FuncIco />} text="Indicadores" />
                    <TreeRow className="pl-[26px]" icon={<HatIco />} text="Asesores Expertos" />
                  </div>
                  <div className="flex w-[16px] shrink-0 flex-col items-center bg-[#f0f0f0]">
                    <svg width="10" height="20" viewBox="0 0 10 20"><path d="M1 14l4-4 4 4" fill="none" stroke="#555" strokeWidth="1.3" /></svg>
                    <div className="h-[46px] w-full bg-[#cdcdcd]" />
                    <svg width="10" height="36" viewBox="0 0 10 36" className="mt-auto"><path d="M1 22l4 4 4-4" fill="none" stroke="#555" strokeWidth="1.3" /></svg>
                  </div>
                </div>
                <div className="ml-[6px] flex h-[23px] w-[271px] shrink-0 border-t border-black">
                  <div className="flex w-[60px] items-center justify-center border-x border-b-2 border-black bg-white text-[12px] text-[#111]">Común</div>
                  <div className="ml-[10px] flex items-center text-[12px] text-[#808080]">Favoritos</div>
                  <div className="ml-[10px] mt-[5px] h-[13px] w-px bg-[#888]" />
                </div>
              </div>
            </div>

            {/* chart workspace */}
            <div className="flex min-w-0 flex-1 flex-col">
              <div className="h-[695px] shrink-0 overflow-hidden border-t-2 border-[#5f6a74] bg-[#5f6a74]">
                <div className="grid grid-cols-[406px_407px] grid-rows-[348px_343px] gap-[2px]">
                  <Window title="EURUSD,M1">
                    <Chart
                      ox={22} right={1055} labelX={1072} vx={vxA} name="EURUSD,M1" nameX={82} ohlc="1.04518 1.04519 1.04515 1.04515" ohlcX={266}
                      labels={[[124, '1.04835'], [229, '1.04760'], [329, '1.04690'], [433, '1.04615'], [539, '1.04540'], [643, '1.04465'], [748, '1.04390'], [853, '1.04315'], [953, '1.04245']]}
                      times={['1 Dec 2022', '1 Dec 14:23', '1 Dec 14:39', '1 Dec 14:55', '1 Dec 15:11']} tx={[37, 229, 421, 613, 805]} candles={eurCandles}
                      extra={
                        <>
                          <SolidLine x1={36} x2={1055} y={563} color="#ff4a10" />
                          <SolidLine x1={36} x2={1055} y={574} color="#bdbdbd" />
                          <OrderLine x1={36} x2={1055} y={785} color="#ff4500" />
                          <OrderLine x1={36} x2={1055} y={793} color="#008a00" />
                          <polyline points={eurMa} fill="none" stroke="#f01010" strokeWidth="3" shapeRendering="auto" />
                          <polyline points="590,155 700,135 825,112" fill="none" stroke="#f01010" strokeWidth="3" shapeRendering="auto" />
                          <line x1="1054" x2="1054" y1="183" y2="353" stroke="#f01010" strokeWidth="9" />
                          <Note x={56} y={780} t="#78940767 sl" />
                          <Note x={56} y={786} t="#78940767 buy 1.00" />
                        </>
                      }
                      tags={
                        <>
                          <Tag x={1058} y={547} w={124} h={12} bg="#ff4a10" t="" tx={1072} />
                          <Tag x={1058} y={558} w={124} h={33} bg="#000" t="1.04515" tx={1072} />
                        </>
                      }
                    />
                    <TradePanel sell={{ small: '1.04', big: '51', sup: '5' }} buy={{ small: '1.04', big: '52', sup: '3' }} />
                  </Window>
                  <Window title="USOUSD,M5">
                    <Chart
                      ox={32} right={1078} labelX={1095} vx={vxB} name="USOUSD,M5" nameX={90} ohlc="81.718 81.757 81.622 81.642" ohlcX={279}
                      labels={[[160, '82.646'], [259, '82.391'], [358, '82.141'], [457, '81.886'], [556, '81.636'], [655, '81.381'], [754, '81.126'], [853, '80.871'], [953, '80.621']]}
                      times={['1 Dec 2022', '1 Dec 11:00', '1 Dec 12:20', '1 Dec 13:40', '1 Dec 15:00']} tx={[46, 238, 430, 622, 814]} candles={usoCandles}
                      extra={
                        <>
                          <SolidLine x1={46} x2={1078} y={530} color="#ff4a10" />
                          <SolidLine x1={46} x2={1078} y={553} color="#bdbdbd" />
                          <OrderLine x1={46} x2={1078} y={556} color="#008a00" />
                          <line x1="1078" x2="1078" y1="470" y2="578" stroke="#000" strokeWidth="8" />
                          <Note x={65} y={550} t="#78937407 buy 1.00" />
                        </>
                      }
                      tags={
                        <>
                          <Tag x={1083} y={513} w={108} h={27} bg="#ff4a10" t="81.706" tx={1095} />
                          <Tag x={1083} y={540} w={108} h={30} bg="#000" t="81.642" tx={1095} />
                        </>
                      }
                    />
                    <TradePanel narrow sell={{ small: '81', big: '64', sup: '2' }} buy={{ small: '81', big: '70', sup: '6' }} />
                  </Window>
                  <Window title="XAUUSD,M5">
                    <Chart
                      ox={22} right={1055} labelX={1072} vx={vxA} name="XAUUSD,M5" nameX={80} ohlc="1785.75 1785.75 1785.03 1785.05" ohlcX={266}
                      labels={[[160, '1791.07'], [259, '1789.27'], [358, '1787.47'], [457, '1785.67'], [556, '1783.92'], [655, '1782.12'], [754, '1780.32'], [853, '1778.52'], [953, '1776.77']]}
                      times={['1 Dec 2022', '1 Dec 11:00', '1 Dec 12:20', '1 Dec 13:40', '1 Dec 15:00']} tx={[37, 229, 421, 613, 805]} candles={xauCandles}
                      extra={
                        <>
                          <SolidLine x1={36} x2={1055} y={493} color="#bdbdbd" />
                          <OrderLine x1={36} x2={1055} y={577} color="#ff4500" />
                          <OrderLine x1={36} x2={1055} y={715} color="#008a00" />
                          <line x1="828" x2="1040" y1="520" y2="520" stroke="#ff4a10" strokeWidth="3" strokeDasharray="12 9" />
                          <polygon points="1039,510 1052,520 1039,530" fill="#ff4a10" />
                          <line x1="1055" x2="1055" y1="112" y2="245" stroke="#000" strokeWidth="8" />
                          <Note x={56} y={570} t="#78936761 sl" />
                          <Note x={56} y={708} t="#78936761 buy 1.00" />
                        </>
                      }
                      tags={<Tag x={1058} y={478} w={124} h={32} bg="#000" t="1785.05" tx={1072} />}
                    />
                    <TradePanel blue sell={{ small: '1785', big: '05' }} buy={{ small: '1785', big: '17' }} />
                  </Window>
                  <Window title="SPX500,M1" active>
                    <Chart
                      ox={32} right={1063} labelX={1080} vx={vxB} name="SPX500,M1" nameX={90} ohlc="4088.02 4088.27 4087.77 4087.77" ohlcX={253} cw={9}
                      labels={[[160, '4093.26'], [259, '4091.41'], [358, '4089.51'], [457, '4087.66'], [556, '4085.76'], [655, '4083.86'], [754, '4081.96'], [853, '4080.06'], [953, '4078.21']]}
                      times={['1 Dec 2022', '1 Dec 14:48', '1 Dec 14:56', '1 Dec 15:04', '1 Dec 15:12']} tx={[46, 238, 430, 622, 814]} candles={spxCandles}
                      extra={
                        <>
                          <SolidLine x1={46} x2={1063} y={425} color="#ff4a10" />
                          <SolidLine x1={46} x2={1063} y={448} color="#bdbdbd" />
                          <OrderLine x1={46} x2={1063} y={808} color="#ff4500" />
                          <OrderLine x1={46} x2={1063} y={820} color="#008a00" />
                          <line x1="1063" x2="1063" y1="150" y2="215" stroke="#000" strokeWidth="8" />
                          <Note x={65} y={798} t="#78936764 sl" />
                          <Note x={65} y={812} t="#78936764 buy 1.00" />
                        </>
                      }
                      tags={
                        <>
                          <Tag x={1068} y={408} w={123} h={28} bg="#ff4a10" t="4088.27" tx={1080} />
                          <Tag x={1068} y={436} w={123} h={28} bg="#000" t="4087.77" tx={1080} />
                        </>
                      }
                    />
                    <TradePanel sell={{ small: '4087', big: '77' }} buy={{ small: '4088', big: '27' }} />
                  </Window>
                </div>
              </div>
              <div className="flex h-[20px] shrink-0 items-stretch border-t border-[#333] bg-[#f0f0f0] pl-[3px] text-[11px] tracking-[-0.2px]">
                {tabs.map((t) => {
                  const on = t === 'SPX500,M1';
                  return (
                    <div
                      key={t}
                      className={
                        on
                          ? 'flex w-[81px] items-center justify-center border-x border-b-2 border-black bg-white text-[#111]'
                          : 'my-[2px] flex items-center border-r border-[#a8a8a8] px-[11.500px] text-[#666]'
                      }
                    >
                      {t}
                    </div>
                  );
                })}
                <div className="ml-auto flex items-center gap-[6px] pr-[14px] text-[10px] text-[#777]">
                  <span>‹</span>
                  <span>›</span>
                </div>
              </div>
            </div>
          </div>

          {/* terminal */}
          <div className="flex min-h-0 flex-1 border-t border-[#d0d0d0] bg-[#f0f0f0] pt-[3px]">
            <div className="flex w-[16px] shrink-0 flex-col items-center">
              <span className="text-[11px] font-bold leading-[12px] text-[#111]">×</span>
              <div className="mt-[2px] w-[13px] flex-1 overflow-hidden bg-linear-to-b from-[#c9dbec] to-[#dde8f3] pt-[87px] text-[11px]">
                <span className="block rotate-180 whitespace-nowrap leading-[13px] [writing-mode:vertical-rl]">Terminal</span>
              </div>
            </div>
            <div className="w-[1060px] shrink-0 overflow-hidden bg-white">
              <div className={`${cols} h-[25px] border-y border-[#e0e0e0] text-[11.500px] text-[#222]`}>
                {headers.map((h, i) => (
                  <div
                    key={i}
                    className={`flex items-center border-r border-[#e0e0e0] pr-[5px] ${
                      i === 0 ? 'pl-[6px]' : i === 4 ? 'justify-between pl-[11px]' : 'justify-end'
                    }`}
                  >
                    {h}
                    {i === 4 && <span className="text-[9px] text-[#777]">/</span>}
                  </div>
                ))}
              </div>
              {rows.map((r, ri) => (
                <div key={r[0]} className={`${cols} h-[20px] border-b border-[#cfcfcf] pt-px text-[11px] tracking-[-0.1px] text-[#111] ${ri % 2 ? 'bg-[#e9e9e9]' : 'bg-white'}`}>
                  {r.map((c, i) => (
                    <div key={i} className={`flex items-center border-r border-[#cfcfcf] pr-[2px] ${i === 0 ? 'pl-[3px]' : 'justify-end'}`}>
                      {i === 0 && <DocDot />}
                      <span className={i === 0 ? 'ml-[4px]' : ''}>{c}</span>
                      {i === 11 && <span className="ml-[9px] mr-[4px] text-[12px] font-bold leading-none text-[#a0a0a0]">×</span>}
                    </div>
                  ))}
                </div>
              ))}
              <div className="h-[10px] bg-[#b8b8b8]" />
            </div>
            <div className="flex w-[17px] shrink-0 flex-col items-center">
              <svg width="10" height="18" viewBox="0 0 10 18" className="mt-px"><path d="M1 12l4-4 4 4" fill="none" stroke="#555" strokeWidth="1.3" /></svg>
              <div className="w-full flex-1 bg-[#cdcdcd]" />
            </div>
          </div>
        </div>
      </div>
    </div>
  );
}
